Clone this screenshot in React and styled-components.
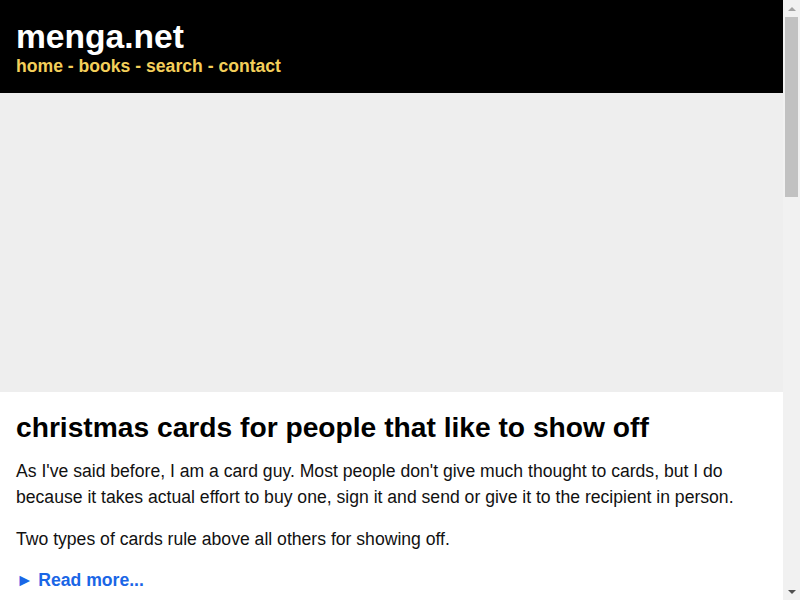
import React from 'react';
import styled, { createGlobalStyle } from 'styled-components';

const GlobalStyle = createGlobalStyle`
  body {
    margin: 0 17px 0 0;
    background: #fff;
    font-family: "Liberation Sans", Arial, sans-serif;
    font-size: 16px;
    color: #111;
  }
`;

const ScrollTrack = styled.div`
  position: fixed;
  top: 0;
  right: 0;
  bottom: 0;
  width: 17px;
  background: #f1f1f1;
  display: flex;
  flex-direction: column;
  align-items: center;
`;

const Arrow = styled.div`
  height: 17px;
  width: 17px;
  display: flex;
  align-items: center;
  justify-content: center;
  &::before {
    content: '';
    border-left: 4px solid transparent;
    border-right: 4px solid transparent;
    ${({ down }) => (down
    ? 'border-top: 4px solid #505050;'
    : 'border-bottom: 4px solid #a3a3a3;')}
  }
`;

const Thumb = styled.div`
  width: 13px;
  height: 180px;
  background: #c1c1c1;
`;

const Spacer = styled.div`
  flex: 1;
`;

const Header = styled.header`
  background: #000;
  padding: 17px 16px 16px;
`;

const SiteTitle = styled.div`
  color: #fff;
  font-weight: bold;
  font-size: 33.6px;
  line-height: 39px;
`;

const Nav = styled.nav`
  color: #f4cf5a;
  font-weight: bold;
  font-size: 17.6px;
  line-height: 21px;
`;

const NavLink = styled.a`
  color: #f4cf5a;
  text-decoration: none;
`;

const Picture = styled.div`
  background: #eeeeee;
  height: 299px;
`;

const Post = styled.article`
  padding: 0 16px 8px;
`;

const PostTitle = styled.h2`
  margin: 19px 0 15px;
  font-size: 28.2px;
  line-height: 32px;
  font-weight: bold;
  color: #000;
`;

const Para = styled.p`
  margin: 0 0 16px;
  font-size: 17.6px;
  line-height: 26px;
  color: #111;
`;

const ReadMore = styled.a`
  display: inline-block;
  margin: 0 0 24px;
  font-size: 17.6px;
  line-height: 24px;
  font-weight: bold;
  color: #1a66e6;
  text-decoration: none;
`;

const Footer = styled.footer`
  background: #000;
  color: #f4cf5a;
  padding: 17px 16px;
  font-size: 15px;
`;

const posts = [
  {
    title: 'christmas cards for people that like to show off',
    paras: [
      "As I've said before, I am a card guy. Most people don't give much thought to cards, but I do because it takes actual effort to buy one, sign it and send or give it to the recipient in person.",
      'Two types of cards rule above all others for showing off.',
    ],
  },
  {
    title: 'the best pens are the ones you already own',
    paras: [
      "I have tried a lot of pens over the years. Fancy ones, cheap ones, ones that cost more than they should. The pen that gets used is the one that is within reach.",
      'That is the whole secret.',
    ],
  },
  {
    title: 'why I still write things down on paper',
    paras: [
      'Paper never needs charging, never asks for an update and never loses my notes in a sync error. It is the most reliable thing on my desk.',
      'Here is how I use it every day.',
    ],
  },
];

const App = () => (
  <>
    <GlobalStyle />
    <Header>
      <SiteTitle>menga.net</SiteTitle>
      <Nav>
        <NavLink href="#">home</NavLink>
        {' - '}
        <NavLink href="#">books</NavLink>
        {' - '}
        <NavLink href="#">search</NavLink>
        {' - '}
        <NavLink href="#">contact</NavLink>
      </Nav>
    </Header>
    {posts.map((post) => (
      <div key={post.title}>
        <Picture />
        <Post>
          <PostTitle>{post.title}</PostTitle>
          {post.paras.map((p) => (
            <Para key={p}>{p}</Para>
          ))}
          <ReadMore href="#">► Read more...</ReadMore>
        </Post>
      </div>
    ))}
    <Footer>menga.net</Footer>
    <ScrollTrack>
      <Arrow />
      <Thumb />
      <Spacer />
      <Arrow down />
    </ScrollTrack>
  </>
);

export default App;
